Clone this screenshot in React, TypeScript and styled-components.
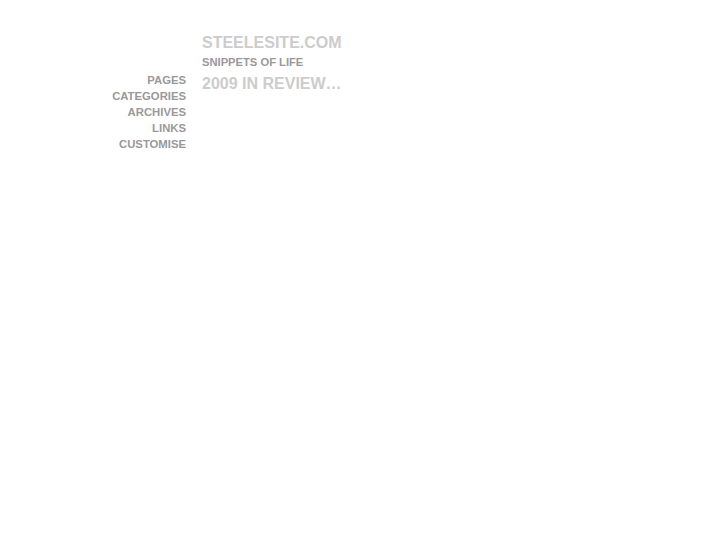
import React from "react";
import styled, { createGlobalStyle } from "styled-components";

const Global = createGlobalStyle`
  html, body { margin: 0; padding: 0; background: #ffffff; }
  body { font-family: "Liberation Sans", Arial, Helvetica, sans-serif; }
`;

const Page = styled.div`
  display: flex;
  align-items: flex-start;
  padding: 32px 0 0 100px;
`;

const Nav = styled.nav`
  display: flex;
  flex-direction: column;
  align-items: flex-end;
  width: 86px;
  margin: 40px 16px 0 0;
`;

const NavLink = styled.a`
  display: block;
  font-size: 11.3px;
  line-height: 16px;
  font-weight: bold;
  color: #999999;
  text-decoration: none;
  text-transform: uppercase;
`;

const Main = styled.main`
  display: flex;
  flex-direction: column;
  padding-top: 1px;
`;

const SiteTitle = styled.h1`
  margin: 0;
  font-size: 16px;
  line-height: 20px;
  font-weight: bold;
  color: #cccccc;
`;

const Tagline = styled.p`
  margin: 0;
  font-size: 11.2px;
  line-height: 18px;
  font-weight: bold;
  color: #999999;
`;

const PostTitle = styled.h2`
  margin: 1px 0 0;
  font-size: 16px;
  line-height: 24px;
  font-weight: bold;
  color: #cccccc;
`;

const links = ["PAGES", "CATEGORIES", "ARCHIVES", "LINKS", "CUSTOMISE"];

export default function App() {
  return (
    <>
      <Global />
      <Page>
        <Nav>
          {links.map((l) => (
            <NavLink key={l} href="#">
              {l}
            </NavLink>
          ))}
        </Nav>
        <Main>
          <SiteTitle>STEELESITE.COM</SiteTitle>
          <Tagline>SNIPPETS OF LIFE</Tagline>
          <PostTitle>2009 IN REVIEW…</PostTitle>
        </Main>
      </Page>
    </>
  );
}
